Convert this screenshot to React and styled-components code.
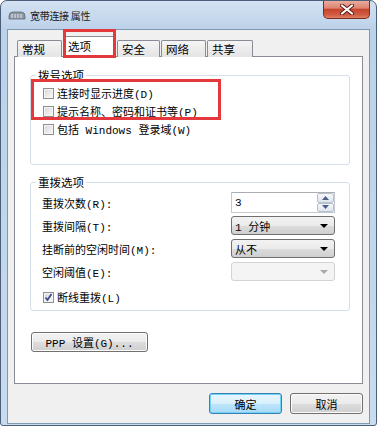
import styled, { createGlobalStyle } from 'styled-components'

const GlobalStyle = createGlobalStyle`
  * { box-sizing: border-box; }
  body {
    margin: 0;
    background: #ffffff;
    font-family: "Liberation Mono", "Noto Sans CJK SC", monospace;
    font-size: 11px;
    color: #000;
  }
`

const Window = styled.div`
  width: 377px;
  height: 426px;
  border: 1px solid #4c5f78;
  border-radius: 7px 7px 3px 3px;
  background: linear-gradient(180deg, #d3e2f2 0px, #bcd2ea 28px, #c2d6ec 60%, #c9dbef 100%);
  padding: 0 6px 1px;
  display: flex;
  flex-direction: column;
  position: relative;
  overflow: hidden;
`

const TitleBar = styled.div`
  height: 28px;
  flex: none;
  display: flex;
  align-items: center;
  padding-left: 1px;
`

const TitleText = styled.span`
  margin-left: 4px;
  font-family: "Noto Sans CJK SC", sans-serif;
  font-size: 10px;
  letter-spacing: -0.3px;
  color: #1b1b1b;
`

const CloseButton = styled.div`
  margin-left: auto;
  align-self: flex-start;
  margin-top: -1px;
  width: 47px;
  height: 19px;
  border: 1px solid #7a2c20;
  border-top: none;
  border-radius: 0 0 5px 5px;
  background: linear-gradient(180deg, #eab0a3 0%, #de8470 45%, #c7452e 52%, #cf5a40 80%, #e07f63 100%);
  display: flex;
  align-items: center;
  justify-content: center;
`

const Client = styled.div`
  flex: 1;
  background: #f0f0f0;
  border: 1px solid #8198b1;
  padding: 6px 6px 9px;
  display: flex;
  flex-direction: column;
`

const TabRow = styled.div`
  height: 21px;
  flex: none;
  display: flex;
  align-items: flex-end;
  gap: 1px;
  padding-left: 3px;
  margin-bottom: -1px;
`

const Tab = styled.div`
  width: ${p => p.$w}px;
  height: ${p => (p.$active ? 21 : 17)}px;
  border: 1px solid #898c95;
  border-bottom: none;
  border-radius: 2px 2px 0 0;
  background: ${p => (p.$active ? '#ffffff' : 'linear-gradient(180deg, #f5f5f5 0%, #ececec 50%, #e4e4e4 100%)')};
  padding: 0 0 ${p => (p.$active ? 3 : 0)}px 4px;
  display: flex;
  align-items: center;
  font-family: "Noto Sans CJK SC", sans-serif;
  font-size: 11.5px;
  position: relative;
  z-index: ${p => (p.$active ? 1 : 0)};

  ${p => p.$marked && `
    &::after {
      content: '';
      position: absolute;
      top: -8px;
      left: -1px;
      right: -1px;
      bottom: -1px;
      border: 3px solid #e5383c;
    }
  `}
`

const Panel = styled.div`
  flex: 1;
  background: #ffffff;
  border: 1px solid #898c95;
  padding: 0 12px 0 15px;
  display: flex;
  flex-direction: column;
`

const Group = styled.fieldset`
  margin: ${p => p.$mt}px 0 0;
  border: 1px solid #d5dfe5;
  border-radius: 3px;
  padding: 2px 14px ${p => p.$pb}px 11px;
  min-width: 0;
`

const Legend = styled.legend`
  padding: 0 2px;
  margin-left: -6px;
  font-family: "Noto Sans CJK SC", sans-serif;
  font-size: 11.5px;
  line-height: 13px;
`

const Marked = styled.div`
  position: relative;

  &::after {
    content: '';
    position: absolute;
    top: -5px;
    left: -11px;
    width: 184px;
    bottom: 0;
    border: 3px solid #e5383c;
  }
`

const CheckRow = styled.label`
  height: 18px;
  display: flex;
  align-items: center;
  gap: 3px;
  padding-left: 1px;
  margin-top: ${p => p.$mt || 0}px;
  white-space: nowrap;
`

const Box = styled.span`
  width: 11px;
  height: 11px;
  flex: none;
  border: 1px solid #8f8f8f;
  background: linear-gradient(135deg, #d6d6d6 0%, #ececec 60%, #f8f8f8 100%);
  box-shadow: inset 0 0 0 1px #f4f4f4;
  display: flex;
  align-items: center;
  justify-content: center;
`

const Form = styled.div`
  display: grid;
  grid-template-columns: 1fr 104px;
  grid-auto-rows: 23px;
  align-items: center;
`

const Label = styled.span`
  white-space: nowrap;
`

const Spin = styled.div`
  height: 21px;
  border: 1px solid #c4c9cf;
  border-top-color: #abadb3;
  background: #fff;
  display: flex;
  align-items: center;
  padding-left: 3px;
`

const SpinButtons = styled.div`
  margin-left: auto;
  width: 17px;
  height: 19px;
  display: flex;
  flex-direction: column;
`

const SpinHalf = styled.div`
  flex: 1;
  border: 1px solid #b8c2cd;
  border-radius: 2px;
  background: linear-gradient(180deg, #f5f7fa, #dfe6ee);
  display: flex;
  align-items: center;
  justify-content: center;
`

const Select = styled.div`
  height: 19px;
  border: 1px solid ${p => (p.$disabled ? '#d3d3d3' : '#707070')};
  border-radius: 3px;
  background: ${p => (p.$disabled
    ? '#f4f4f4'
    : 'linear-gradient(180deg, #f2f2f2 0%, #ebebeb 50%, #dddddd 51%, #cfcfcf 100%)')};
  display: flex;
  align-items: center;
  padding: 0 6px 0 3px;
  white-space: nowrap;
`

const Arrow = styled.span`
  margin-left: auto;
  width: 0;
  height: 0;
  border-left: 4px solid transparent;
  border-right: 4px solid transparent;
  border-top: 4px solid ${p => (p.$disabled ? '#a8a8a8' : '#000')};
`

const Button = styled.div`
  width: ${p => p.$w}px;
  height: ${p => p.$h}px;
  border: 1px solid ${p => (p.$default ? '#3c7fb1' : '#707070')};
  border-radius: 3px;
  background: ${p => (p.$default
    ? 'linear-gradient(180deg, #eaf6fd 0%, #d9f0fc 50%, #bee6fd 51%, #a7d9f5 100%)'
    : 'linear-gradient(180deg, #f2f2f2 0%, #ebebeb 50%, #dddddd 51%, #cfcfcf 100%)')};
  box-shadow: ${p => (p.$default ? 'inset 0 0 0 1px #6fd2f7' : 'inset 0 0 0 1px #fbfbfb')};
  display: flex;
  align-items: center;
  justify-content: center;
  white-space: nowrap;
`

const PppButton = styled(Button)`
  margin: 21px 0 0 1px;
`

const Footer = styled.div`
  flex: none;
  display: flex;
  justify-content: flex-end;
  gap: 8px;
  margin-top: 9px;
`

function ModemIcon() {
  return (
    <svg width="18" height="9" viewBox="0 0 18 9">
      <path d="M1 8 L1 5 Q1 1 5 1 L13 1 Q17 1 17 5 L17 8 Z" fill="#8d98a4" stroke="#5f6a76" strokeWidth="0.8" />
      <path d="M4 3 V7 M7 3 V7 M10 3 V7 M13 3 V7" stroke="#e6ebf0" strokeWidth="1" />
    </svg>
  )
}

function CloseX() {
  return (
    <svg width="14" height="11" viewBox="0 0 14 11">
      <path d="M2 1.5 L12 9.5 M12 1.5 L2 9.5" stroke="#5a1a12" strokeWidth="4" strokeLinecap="round" />
      <path d="M2 1.5 L12 9.5 M12 1.5 L2 9.5" stroke="#ffffff" strokeWidth="2.2" strokeLinecap="round" />
    </svg>
  )
}

function Check({ checked }) {
  return (
    <Box>
      {checked && (
        <svg width="9" height="9" viewBox="0 0 9 9">
          <path d="M1.5 4.5 L3.5 7 L7.5 1" fill="none" stroke="#3c4f8c" strokeWidth="1.8" />
        </svg>
      )}
    </Box>
  )
}

function Triangle({ up }) {
  return (
    <svg width="7" height="4" viewBox="0 0 7 4">
      <path d={up ? 'M0 4 L3.5 0 L7 4 Z' : 'M0 0 L3.5 4 L7 0 Z'} fill="#4b5f85" />
    </svg>
  )
}

const tabs = [
  { name: '常规', w: 45 },
  { name: '选项', w: 53, active: true },
  { name: '安全', w: 43 },
  { name: '网络', w: 45 },
  { name: '共享', w: 46 },
]

export default function App() {
  return (
    <>
      <GlobalStyle />
      <Window>
        <TitleBar>
          <ModemIcon />
          <TitleText>宽带连接 属性</TitleText>
          <CloseButton>
            <CloseX />
          </CloseButton>
        </TitleBar>
        <Client>
          <TabRow>
            {tabs.map(t => (
              <Tab key={t.name} $w={t.w} $active={t.active} $marked={t.active}>
                {t.name}
              </Tab>
            ))}
          </TabRow>
          <Panel>
            <Group $mt={12} $pb={26}>
              <Legend>拨号选项</Legend>
              <Marked>
                <CheckRow><Check />连接时显示进度(D)</CheckRow>
                <CheckRow><Check />提示名称、密码和证书等(P)</CheckRow>
              </Marked>
              <CheckRow><Check />包括 Windows 登录域(W)</CheckRow>
            </Group>

            <Group $mt={11} $pb={4}>
              <Legend>重拨选项</Legend>
              <Form>
                <Label>重拨次数(R):</Label>
                <Spin>
                  3
                  <SpinButtons>
                    <SpinHalf><Triangle up /></SpinHalf>
                    <SpinHalf><Triangle /></SpinHalf>
                  </SpinButtons>
                </Spin>
                <Label>重拨间隔(T):</Label>
                <Select>1 分钟<Arrow /></Select>
                <Label>挂断前的空闲时间(M):</Label>
                <Select>从不<Arrow /></Select>
                <Label>空闲阈值(E):</Label>
                <Select $disabled><Arrow $disabled /></Select>
              </Form>
              <CheckRow $mt={5}><Check checked />断线重拨(L)</CheckRow>
            </Group>

            <PppButton $w={117} $h={20}>PPP 设置(G)...</PppButton>
          </Panel>
          <Footer>
            <Button $w={73} $h={21} $default>确定</Button>
            <Button $w={73} $h={21}>取消</Button>
          </Footer>
        </Client>
      </Window>
    </>
  )
}
